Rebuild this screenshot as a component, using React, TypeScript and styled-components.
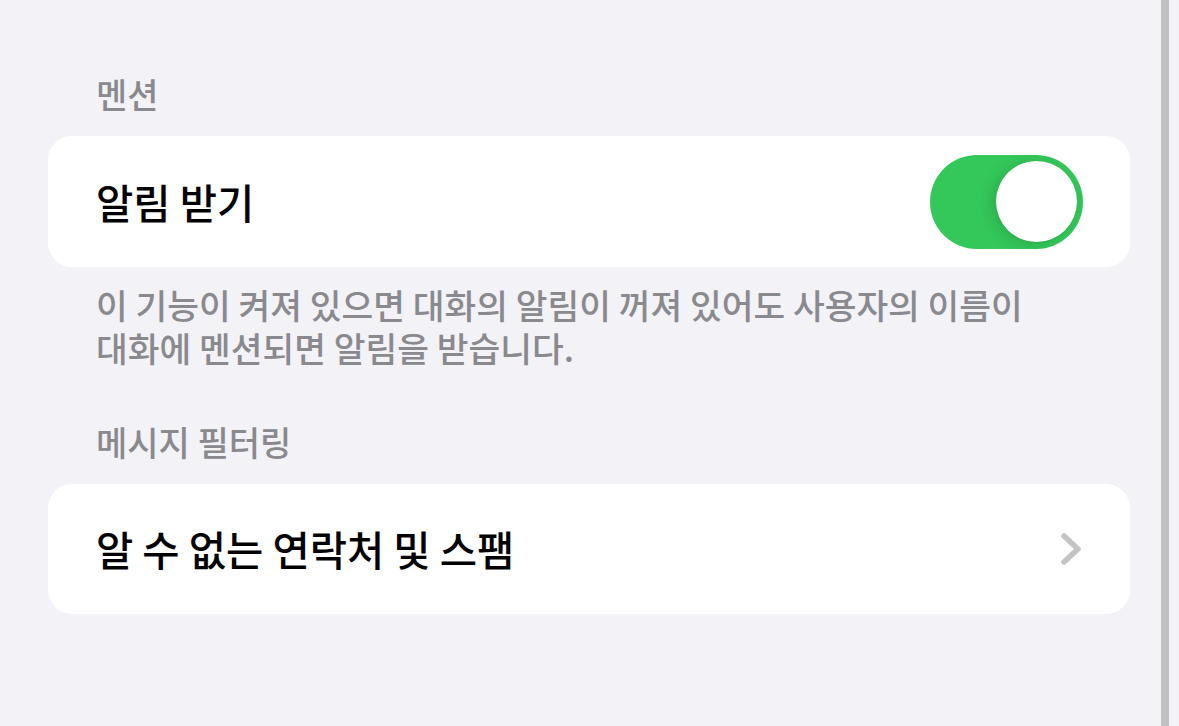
import React from "react";
import styled, { createGlobalStyle } from "styled-components";

const Global = createGlobalStyle`
  html, body {
    margin: 0;
    padding: 0;
    background: #f2f2f7;
  }
  body {
    font-family: "Noto Sans CJK KR", "Noto Sans", sans-serif;
    -webkit-font-smoothing: antialiased;
  }
`;

const Screen = styled.div`
  display: flex;
  width: 1179px;
  height: 726px;
  background: #f2f2f7;
  overflow: hidden;
`;

const Content = styled.main`
  flex: 1;
  display: flex;
  flex-direction: column;
  padding: 74px 31px 0 48px;
`;

const ScrollRail = styled.div`
  width: 8px;
  margin-right: 10px;
  background: #c1c1c4;
  height: 100%;
`;

const SectionHeader = styled.div<{ $top?: number }>`
  font-size: 34px;
  line-height: 40px;
  font-weight: 500;
  color: #8a8a8e;
  padding-left: 48px;
  margin-top: ${(p) => p.$top ?? 0}px;
  margin-bottom: 22px;
`;

const Card = styled.section<{ $height: number }>`
  background: #ffffff;
  border-radius: 24px;
  height: ${(p) => p.$height}px;
  display: flex;
  align-items: center;
  justify-content: space-between;
  padding: 0 47px 0 48px;
`;

const RowLabel = styled.span`
  font-size: 40.5px;
  line-height: 48px;
  font-weight: 500;
  color: #000000;
`;

const Footer = styled.p`
  margin: 16px 0 0 0;
  padding: 0 96px 0 48px;
  font-size: 34.5px;
  line-height: 43px;
  font-weight: 500;
  color: #8a8a8e;
`;

const SwitchTrack = styled.div<{ $on: boolean }>`
  position: relative;
  width: 153px;
  height: 94px;
  border-radius: 47px;
  background: ${(p) => (p.$on ? "#34c759" : "#e9e9ea")};
  flex-shrink: 0;
`;

const SwitchKnob = styled.div<{ $on: boolean }>`
  position: absolute;
  top: 6.5px;
  ${(p) => (p.$on ? "right: 6px;" : "left: 6px;")}
  width: 81px;
  height: 81px;
  border-radius: 50%;
  background: #ffffff;
  box-shadow: -4px 2px 14px rgba(0, 60, 20, 0.18), 0 1px 2px rgba(0, 0, 0, 0.06);
`;

const Chevron = styled.svg`
  width: 22px;
  height: 34px;
  margin-right: 1px;
  flex-shrink: 0;
`;

function Switch({ on }: { on: boolean }) {
  return (
    <SwitchTrack $on={on}>
      <SwitchKnob $on={on} />
    </SwitchTrack>
  );
}

export default function App() {
  return (
    <>
      <Global />
      <Screen>
        <Content>
          <SectionHeader>멘션</SectionHeader>
          <Card $height={131}>
            <RowLabel>알림 받기</RowLabel>
            <Switch on />
          </Card>
          <Footer>
            이 기능이 켜져 있으면 대화의 알림이 꺼져 있어도 사용자의 이름이 대화에 멘션되면 알림을 받습니다.
          </Footer>
          <SectionHeader $top={53}>메시지 필터링</SectionHeader>
          <Card $height={130}>
            <RowLabel>알 수 없는 연락처 및 스팸</RowLabel>
            <Chevron viewBox="0 0 22 34">
              <polyline
                points="4,4 18,17 4,30"
                fill="none"
                stroke="#c4c4c7"
                strokeWidth="5.5"
                strokeLinecap="round"
                strokeLinejoin="round"
              />
            </Chevron>
          </Card>
        </Content>
        <ScrollRail />
      </Screen>
    </>
  );
}
